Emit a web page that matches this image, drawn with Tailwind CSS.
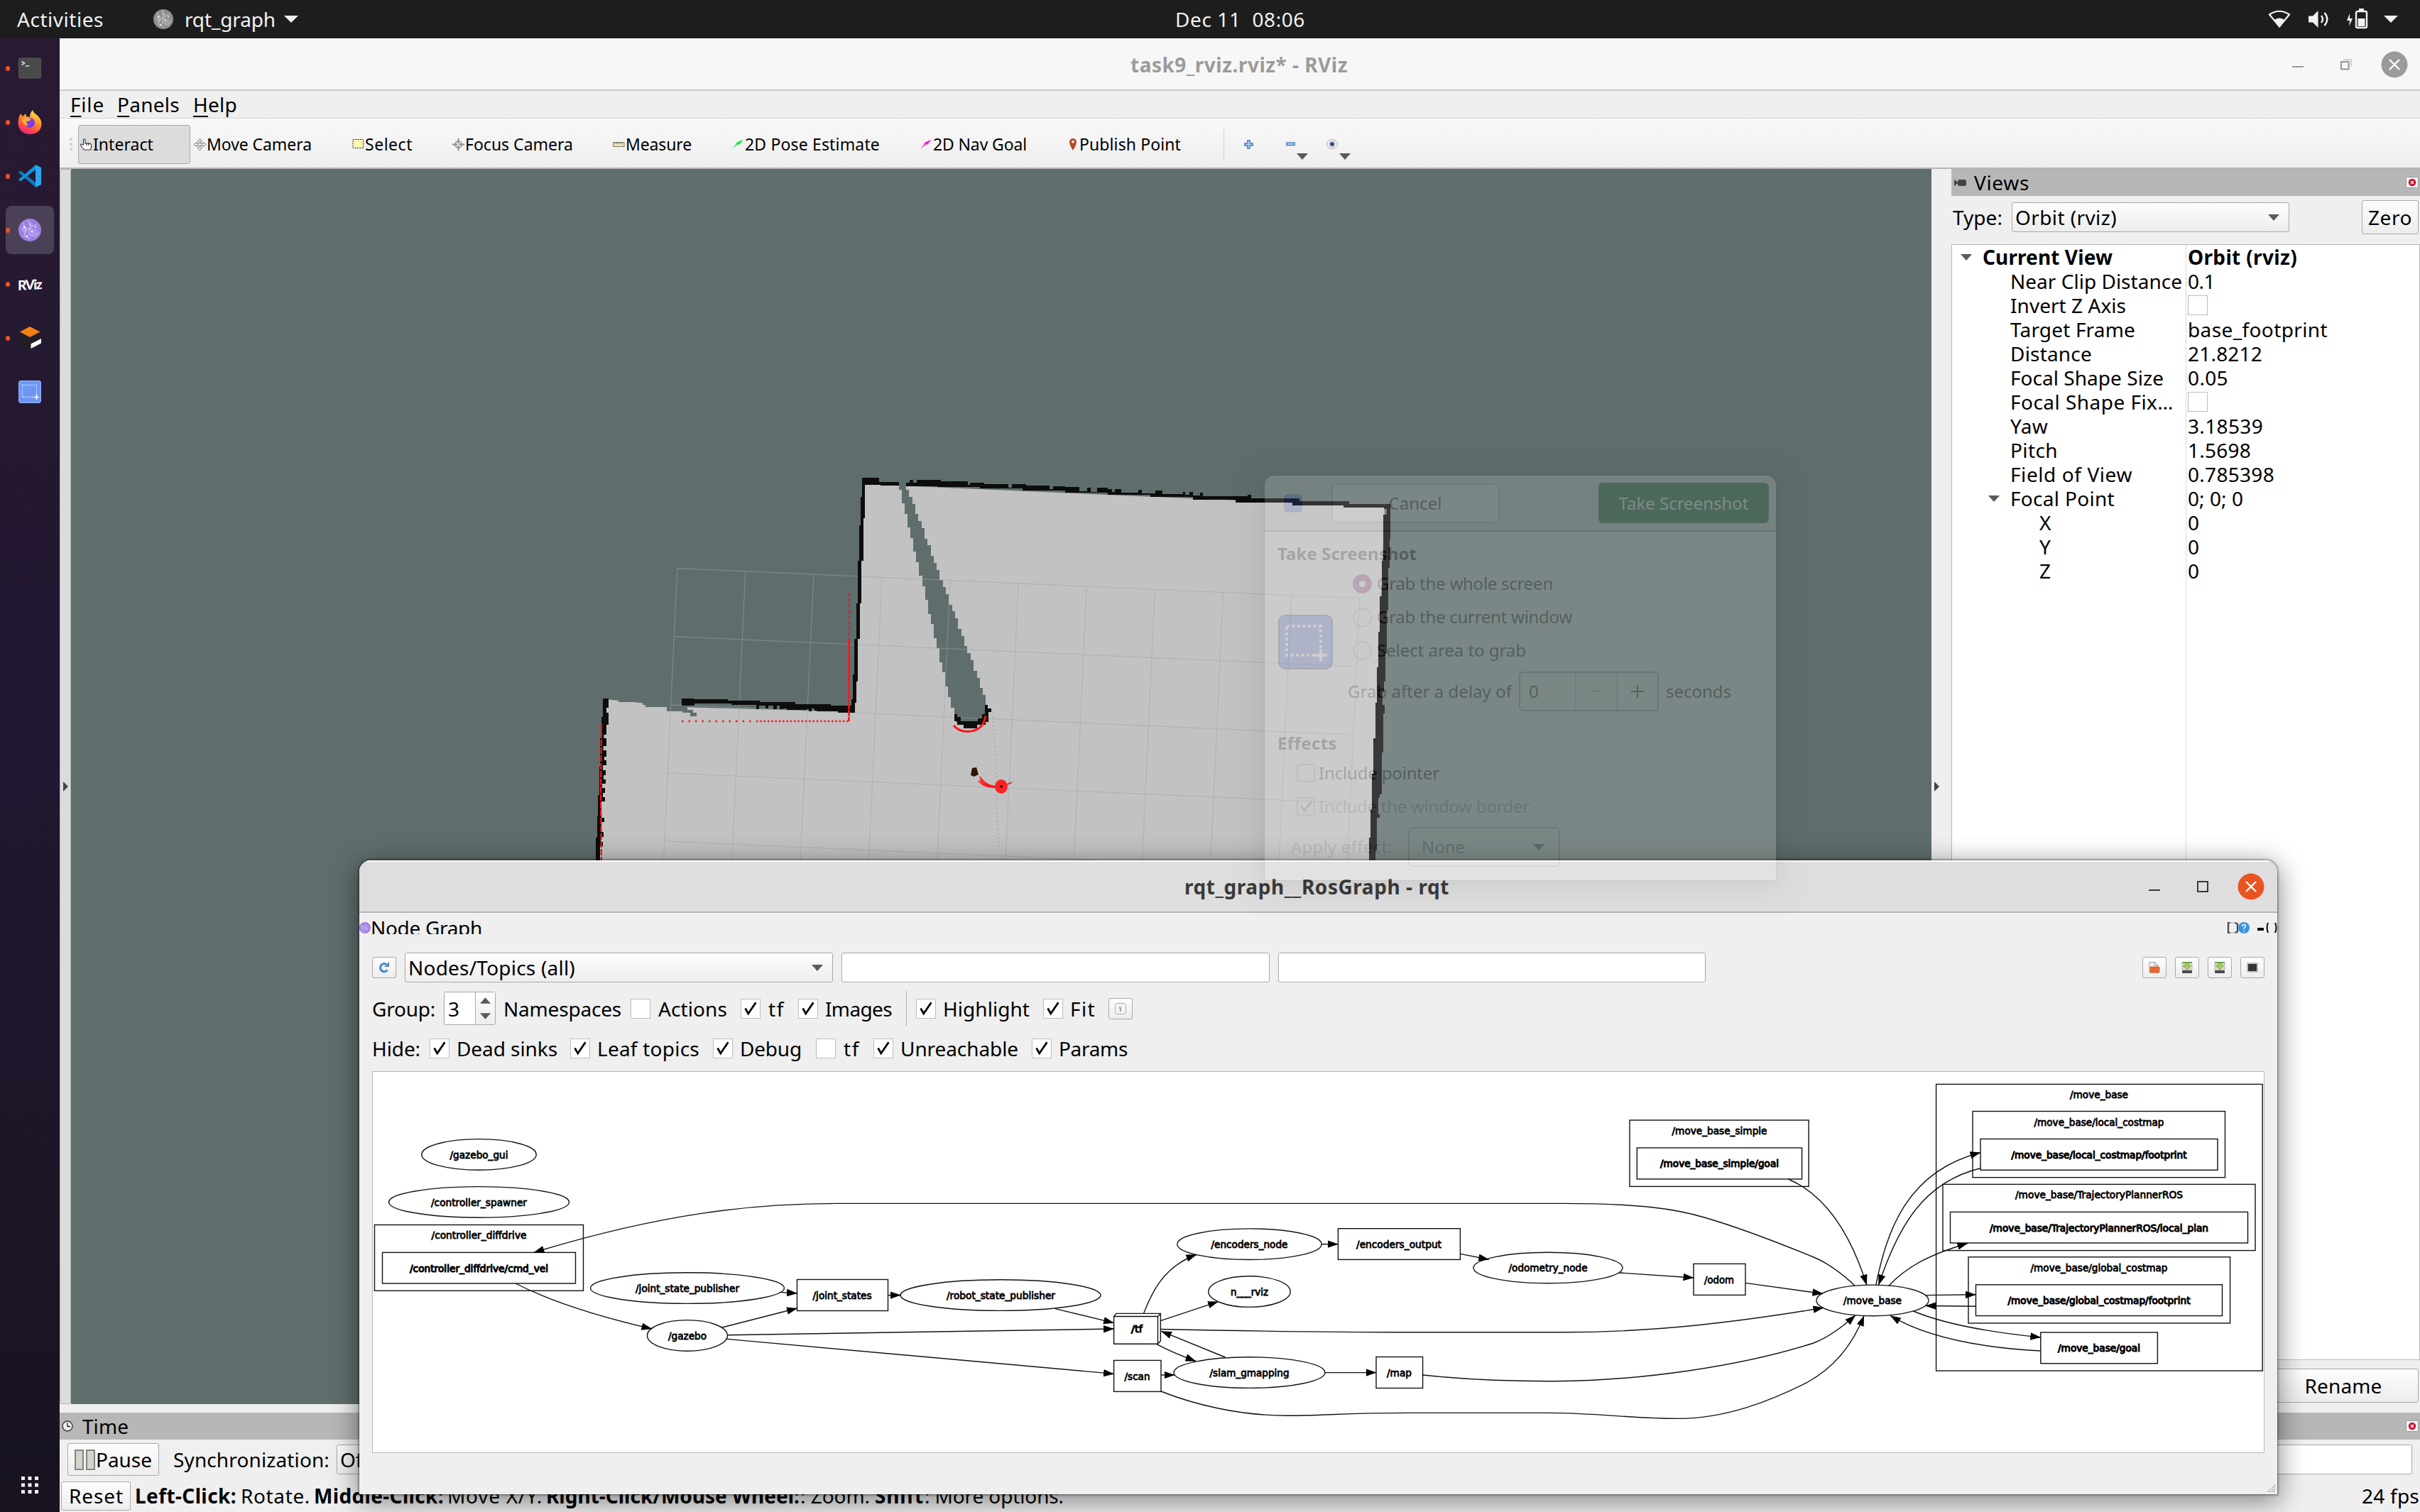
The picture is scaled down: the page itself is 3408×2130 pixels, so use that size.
<!DOCTYPE html>
<html lang="en">
<head>
<meta charset="utf-8">
<title>rqt_graph</title>
<script src="https://cdn.jsdelivr.net/npm/@tailwindcss/browser@4"></script>
</head>
<body class="overflow-hidden">
<svg class="hidden">
  <defs>
    <symbol id="shot" viewBox="0 0 32 32"><rect x="0" y="0" width="32" height="32" rx="4" fill="#6d97f3"/><rect x="0.7" y="0.7" width="30.6" height="30.6" rx="3.5" fill="none" stroke="#8fb0fb" stroke-width="1.2"/><rect x="5.5" y="6.5" width="20" height="17" fill="none" stroke="#e8efff" stroke-width="1.4" stroke-dasharray="1.4 1.8"/><path d="M25.5 20v7M22 23.5h7" stroke="#fff" stroke-width="1.5"/></symbol>
    <symbol id="check" viewBox="0 0 28 28"><path d="M6 13.500L10.500 21.500L22 4.500" fill="none" stroke="#000" stroke-width="3"/></symbol>
    <symbol id="down" viewBox="0 0 16 9"><path d="M0 0h16l-8 9z" fill="#5a5a5a"/></symbol>
    <symbol id="moon" viewBox="0 0 32 32"><circle cx="16" cy="16" r="16" fill="currentColor"/><path d="M6 6l5 9-3 9 8 4M14 2l3 10 9-4M17 12l-3 10 9 3 6-6" fill="none" stroke="#fff" stroke-opacity=".3" stroke-width="2"/><path d="M3 14l7-3 4 5-6 5zM18 14l8 2-2 7-8-2zM15 4l5 4-4 4z" fill="#fff" fill-opacity=".22"/><g fill="#fff" fill-opacity=".9"><circle cx="8" cy="12" r="1.300"/><circle cx="19" cy="18" r="1.200"/><circle cx="12" cy="25" r="1.200"/><circle cx="24" cy="12" r="1.100"/><circle cx="15" cy="14" r="1"/></g></symbol>
    <symbol id="closered" viewBox="0 0 18 16"><rect x=".5" y=".5" width="17" height="15" rx="2" fill="#f6f6f6" stroke="#9c9c9c"/><circle cx="9" cy="8" r="5.200" fill="#c8102e"/><path d="M7 6l4 4M11 6l-4 4" stroke="#fff" stroke-width="1.400"/></symbol>
    <symbol id="save" viewBox="0 0 16 16"><rect x="1" y="1" width="14" height="11" rx="1" fill="#d8d8d4" stroke="#9a9a96" stroke-width=".6"/><rect x="1" y="0" width="14" height="1.500" fill="#5d9a3a"/><path d="M5.500 1.500h5v4h3L8 11 2.500 5.500h3z" fill="#a5d05c" stroke="#6a9b32" stroke-width=".8"/><rect x="1" y="12" width="14" height="4" rx="1" fill="#4a4a4a"/></symbol>
  </defs>
</svg>
<div class="relative flex h-[2130px] w-[3408px] flex-col overflow-hidden bg-[#efefef] font-['Noto_Sans',sans-serif] text-[28px] whitespace-nowrap text-black">

  <!-- system bar -->
  <header class="flex h-[54px] shrink-0 items-center bg-[#1d1d1d] text-[#f2f2f2]">
    <span class="fit ml-[24px] w-[122px]">Activities</span>
    <svg class="ml-[70px] size-[28px] text-[#8f8f8f]"><use href="#moon"/></svg>
    <span class="fit ml-[16px] w-[128px]">rqt_graph</span>
    <svg class="ml-[12px] h-[10px] w-[20px]" viewBox="0 0 20 10"><path d="M0 0h20L10 10z" fill="#f2f2f2"/></svg>
    <span class="fit ml-[1235px] w-[183px] whitespace-pre">Dec 11  08:06</span>
    <svg class="ml-[1356px] h-[26px] w-[32px]" viewBox="0 0 32 26"><path d="M2 6.500Q16-3 30 6.500L16 23.500z" fill="none" stroke="#f2f2f2" stroke-width="2.200"/><path d="M8.500 14Q16 9 23.500 14L16 23.500z" fill="#f2f2f2"/></svg>
    <svg class="ml-[24px] h-[26px] w-[32px]" viewBox="0 0 32 26"><path d="M1 8.500h6L14.500 1v24L7 17.500H1z" fill="#f2f2f2"/><path d="M19 8q4 5 0 10M23.500 4q7.500 9 0 18" fill="none" stroke="#f2f2f2" stroke-width="2.400"/></svg>
    <svg class="ml-[22px] h-[30px] w-[32px]" viewBox="0 0 32 30"><path d="M5 7L1 17h4l-1 8 5-11H5z" fill="#f2f2f2"/><rect x="14" y="4" width="15" height="23" rx="2" fill="none" stroke="#f2f2f2" stroke-width="2.400"/><rect x="18" y="0" width="7" height="3.500" fill="#f2f2f2"/><rect x="16.500" y="14" width="10" height="11" fill="#f2f2f2"/></svg>
    <svg class="ml-[21px] h-[10px] w-[20px]" viewBox="0 0 20 10"><path d="M0 0h20L10 10z" fill="#f2f2f2"/></svg>
  </header>

  <div class="flex h-[2076px] shrink-0">
    <!-- dock -->
    <nav class="flex w-[84px] shrink-0 flex-col bg-linear-to-b from-[#291a33] via-[#211730] to-[#18131f] pt-[4px]">
      <div class="flex h-[76px] items-center pl-[8px]"><i class="h-[7px] w-[6px] rounded-full bg-[#e95420]"></i>
        <svg class="ml-[12px] size-[32px]" viewBox="0 0 32 32"><rect x="0" y="2" width="32" height="28" rx="3" fill="#4a4a4a" stroke="#5c5c5c"/><path d="M4.500 6.500l4 2.500-4 2.500M9.500 13h6" fill="none" stroke="#d6d6d6" stroke-width="1.700"/></svg></div>
      <div class="flex h-[76px] items-center pl-[8px]"><i class="h-[7px] w-[6px] rounded-full bg-[#e95420]"></i>
        <svg class="ml-[11px] size-[34px]" viewBox="0 0 34 34"><defs><linearGradient id="ff" x1=".8" y1="0" x2=".3" y2="1"><stop offset="0" stop-color="#fff04a"/><stop offset=".4" stop-color="#ff9a2a"/><stop offset=".75" stop-color="#ff4b45"/><stop offset="1" stop-color="#e8208a"/></linearGradient></defs><path d="M21 0q1 4 6 7 7 6 6.500 14-2 12.500-16 13Q3 34 .5 20 0 12 4 5l3 4 4-4 1 4 5 1q0-6 4-10z" fill="url(#ff)"/><circle cx="17" cy="18" r="7" fill="#7a3ee0"/><path d="M6 13q6-4 13 0-2 3-7 3 0 3 3 6-8 0-9-9z" fill="#ffb02c"/></svg></div>
      <div class="flex h-[76px] items-center pl-[8px]"><i class="h-[7px] w-[6px] rounded-full bg-[#e95420]"></i>
        <svg class="ml-[12px] size-[32px]" viewBox="0 0 32 32"><path d="M0 11l3-2.500L24 25v6.500z" fill="#0a7cc4"/><path d="M0 21l3 2.500L24 7V.5z" fill="#1292dc"/><path d="M24 0l8 4v24l-8 4V7z" fill="#2aa6ee"/></svg></div>
      <div class="flex h-[76px] items-center pl-[8px]"><div class="flex h-[68px] w-[68px] items-center rounded-lg bg-[#4b4157]"><i class="h-[7px] w-[6px] rounded-full bg-[#e95420]"></i>
        <svg class="ml-[12px] size-[32px] text-[#9c7fe2]"><use href="#moon"/></svg></div></div>
      <div class="flex h-[76px] items-center pl-[8px]"><i class="h-[7px] w-[6px] rounded-full bg-[#e95420]"></i>
        <span class="ml-[11px] w-[34px] -skew-y-3 font-['Lato',sans-serif] text-[19px] leading-none font-black tracking-[-1.5px] text-white">RViz</span></div>
      <div class="flex h-[76px] items-center pl-[8px]"><i class="h-[7px] w-[6px] rounded-full bg-[#e95420]"></i>
        <svg class="ml-[11px] size-[34px]" viewBox="0 0 34 34"><path d="M0 9L17 17v17L0 25z" fill="#221d26"/><path d="M34 9L17 17v17l17-9z" fill="#221d26"/><path d="M17 1l14.500 7.500L17 16 3 8.500z" fill="#f58113"/><path d="M18.500 25.500L33 18v6.500L18.500 32z" fill="#fff"/></svg></div>
      <div class="flex h-[76px] items-center pl-[26px]"><svg class="size-[32px]"><use href="#shot"/></svg></div>
      <svg class="mt-auto mb-[26px] ml-[30px] size-[24px]" viewBox="0 0 24 24" fill="#eee"><path d="M0 0h5v5H0zM9.500 0h5v5h-5zM19 0h5v5h-5zM0 9.500h5v5H0zM9.500 9.500h5v5h-5zM19 9.500h5v5h-5zM0 19h5v5H0zM9.500 19h5v5h-5zM19 19h5v5h-5z"/></svg>
    </nav>

    <!-- RViz main window -->
    <main class="flex w-[3324px] shrink-0 flex-col">
      <div class="flex h-[74px] items-center border-t-2 border-b-2 border-t-[#fdfdfd] border-b-[#cbcbcb] bg-[#f7f7f7]">
        <span class="fit ml-[1508px] w-[306px] font-bold tracking-[0.5px] text-[#9b9b9b]">task9_rviz.rviz* - RViz</span>
        <i class="mt-[6px] ml-[1330px] h-[2px] w-[16px] bg-[#9b9b9b]"></i>
        <svg class="ml-[52px] size-[16px]" viewBox="0 0 16 16"><rect x="1" y="4" width="10.500" height="10.500" fill="none" stroke="#959595" stroke-width="2"/><path d="M4 1h11v10" fill="none" stroke="#c4c4c4" stroke-width="1.500"/></svg>
        <svg class="ml-[41px] size-[38px]" viewBox="0 0 38 38"><circle cx="19" cy="19" r="18.500" fill="#9b9b9b"/><path d="M12 12l14 14M26 12L12 26" stroke="#fff" stroke-width="2.400"/></svg>
      </div>
      <div class="flex h-[39px] items-center border-b border-[#d3d3d3] bg-[#efefef]">
        <span class="fit ml-[15px] w-[48px]"><u class="underline-offset-[5px]">F</u>ile</span>
        <span class="fit ml-[18px] w-[88px]"><u class="underline-offset-[5px]">P</u>anels</span>
        <span class="fit ml-[19px] w-[62px]"><u class="underline-offset-[5px]">H</u>elp</span>
      </div>
      <div class="flex h-[71px] items-center border-b-2 border-[#b5b5b5] bg-linear-to-b from-[#f9f9f9] to-[#eeeeee] pt-[3px] text-[23px]">
        <i class="ml-[14px] h-[18px] w-0 border-l-4 border-dotted border-[#cfcfcf]"></i>
        <div class="ml-[8px] flex h-[55px] w-[158px] items-center rounded-[3px] border border-[#a9a9a9] bg-[#dcdcdc]">
          <svg class="ml-[2px] size-[17px]" viewBox="0 0 17 17"><path d="M4.500 9V1.500q1.500-1 2.500 0V7q1-1 2 0 1-1 2 0 1-1 2 .5 2-.5 2.500 1.500v4l-1 3h-9L2 11.500.5 9q1-2 4 0zM9 7v3M11.500 7.500V10" fill="#fff" stroke="#333" stroke-width="1.100"/></svg>
          <span class="fit ml-[1px] w-[85px]">Interact</span>
        </div>
        <svg class="ml-[5px] size-[17px]" viewBox="0 0 17 17"><path d="M8.500 0l3 4H9.500v3.500H13V5.500l4 3-4 3V9.500H9.500V13h2l-3 4-3-4h2V9.500H4v2l-4-3 4-3v2h3.500V4h-2z" fill="#fff" stroke="#666" stroke-width=".9"/></svg>
        <span class="fit ml-[1px] w-[148px]">Move Camera</span>
        <svg class="ml-[57px] size-[17px]" viewBox="0 0 17 17"><rect x="1" y="1.500" width="14.500" height="12" fill="#fff6b0" stroke="#222" stroke-dasharray="2 1.300"/></svg>
        <span class="fit ml-[1px] w-[67px]">Select</span>
        <svg class="ml-[56px] size-[17px]" viewBox="0 0 17 17"><circle cx="8.500" cy="8.500" r="4.500" fill="none" stroke="#888" stroke-width="1.500"/><path d="M8.500 0v17M0 8.500h17" stroke="#888" stroke-width="1.800"/><circle cx="8.500" cy="8.500" r="1.500" fill="#eee"/></svg>
        <span class="fit ml-[1px] w-[152px]">Focus Camera</span>
        <svg class="ml-[56px] size-[17px]" viewBox="0 0 17 17"><rect x=".5" y="5.500" width="15.500" height="6" fill="#eee5b5" stroke="#7d7a68"/><path d="M3 5v3M5.500 5v3M8 5v3M10.500 5v3M13 5v3" stroke="#666" stroke-width=".9"/></svg>
        <span class="fit ml-[1px] w-[93px]">Measure</span>
        <svg class="ml-[57px] size-[16px]" viewBox="0 0 16 16"><path d="M.5 14.500l6-7.500-1.500-.5L15.500 1.500 10 9 8.500 8z" fill="#12e83c"/></svg>
        <span class="fit ml-[2px] w-[190px]">2D Pose Estimate</span>
        <svg class="ml-[57px] size-[16px]" viewBox="0 0 16 16"><path d="M.5 14.500l6-7.500-1.500-.5L15.500 1.500 10 9 8.500 8z" fill="#e81ad2"/></svg>
        <span class="fit ml-[2px] w-[132px]">2D Nav Goal</span>
        <svg class="ml-[59px] h-[17px] w-[12px]" viewBox="0 0 12 17"><path d="M6 17Q1 9 1 5a5 5 0 0110 0q0 4-5 12z" fill="#b8452c"/><circle cx="6" cy="4.800" r="2" fill="#fbe3da"/></svg>
        <span class="fit ml-[3px] w-[143px]">Publish Point</span>
        <i class="ml-[60px] h-[43px] w-px bg-[#cdcdcd]"></i>
        <svg class="ml-[28px] size-[13px]" viewBox="0 0 13 13"><path d="M4.800.8h3.400v4h4v3.400h-4v4H4.800v-4h-4V4.800h4z" fill="#a9cdf3" stroke="#3a6fb0" stroke-width="1.200"/></svg>
        <svg class="ml-[46px] h-[12px] w-[13px]" viewBox="0 0 13 12"><rect x=".8" y="4" width="11.400" height="3.600" fill="#a9cdf3" stroke="#3a6fb0" stroke-width="1.200"/></svg>
        <svg class="mt-[34px] ml-[2px] h-[9px] w-[16px]"><use href="#down"/></svg>
        <svg class="ml-[26px] size-[16px]" viewBox="0 0 16 16"><ellipse cx="8" cy="8" rx="7.500" ry="6.500" fill="#f2f2f2" stroke="#aaa"/><circle cx="8" cy="8" r="4" fill="#8799cf"/><circle cx="8" cy="8" r="1.800" fill="#111"/></svg>
        <svg class="mt-[34px] ml-[2px] h-[9px] w-[16px]"><use href="#down"/></svg>
      </div>

      <div class="flex h-[1740px] shrink-0">
        <div class="flex w-[16px] items-center justify-center rounded-[3px] border border-[#b0b0b0] bg-[#dcdcdc]"><svg class="h-[14px] w-[7px]" viewBox="0 0 7 14"><path d="M0 0l7 7-7 7z" fill="#444"/></svg></div>
        <svg class="h-[1740px] w-[2620px] shrink-0 bg-[#5f6e6d]" viewBox="100 238 2620 1740">
          <!-- free space of the occupancy map -->
          <path d="M1216 682L1950 714 1930 1230H843L853 985 960 996 1202 1003z" fill="#c2c2c2"/>
          <path d="M871 982V989H905V993H909V996H939V1002H961V1004H972V1009H981V1004H976V1000H968V996H964V982z" fill="#5f6e6d" shape-rendering="crispEdges"/>
          <path d="M1266 678H1276V690H1280V700H1285V710H1289V724H1293V734H1298V744H1302V759H1306V768H1311V783H1315V793H1319V803H1323V817H1328V827H1332V837H1336V852H1341V861H1345V871H1349V886H1354V896H1358V910H1362V920H1367V930H1371V945H1376V955H1380V969H1384V979H1388V1014H1384V1018H1347V1011H1344V997H1339V982H1335V967H1331V947H1327V933H1323V913H1319V899H1315V879H1311V865H1307V845H1303V826H1299V811H1294V792H1290V777H1286V758H1282V743H1278V724H1274V709H1270V690H1266z" fill="#5f6e6d" shape-rendering="crispEdges"/>
          <g transform="matrix(.961 .0424 -.0446 .961 953.700 800.600)"><path d="M0 0H1000M0 100H1000M0 200H1000M0 300H1000M0 400H1000M0 0V450M100 0V450M200 0V450M300 0V450M400 0V450M500 0V450M600 0V450M700 0V450M800 0V450M900 0V450M1000 0V450" fill="none" stroke="#a0a4a4" stroke-opacity=".5" stroke-width="1.200"/></g>
          <g fill="#0d0d0d" shape-rendering="crispEdges">
            <path d="M1214 673H1238V679H1266V684H1240V683H1218V730H1216V790H1213V850H1211V900H1208V960H1206V990H1204V1004H1199V985H1201V950H1203V900H1206V850H1208V790H1210V740H1212V700H1214z"/>
            <path d="M1276 680H1281V676H1286V680H1291V676H1325V678H1363V683H1366V680H1386V682H1420V687H1425V682H1445V684H1478V689H1483V685H1500V686H1520V692H1531V687H1536V693H1545V687H1560V689H1566V693H1570V689H1579V694H1603V690H1608V695H1627V691H1637V696H1666V693H1669V697H1675V693H1680V698H1690V694H1694V699H1757V697H1762V702H1830V706H1900V710H1958V715H1892V712H1820V708H1740V704H1680V700H1620V697H1560V694H1500V691H1440V688H1380V686H1320V685H1276z"/>
            <path d="M960 984H977V985H1025V987H1070V989H1120V992H1170V994H1204V1004H1180V1002H1150V1001H1147V998H1143V1002H1139V999H1136V1000H1108V998H1103V999H1098V994H1094V999H1089V994H1082V998H1078V994H1069V999H1065V993H1030V991H978V994H960z"/>
            <path d="M849 984H857V997H854V1004H857V1021H854V1035H850V1040H854V1051H849V1057H854V1066H851V1071H854V1078H849V1085H853V1092H850V1098H853V1104H848V1110H852V1117H849V1123H852V1129H847V1152H851V1158H847V1172H850V1179H846V1186H849V1192H845V1213H839V1180H841V1150H842V1120H844V1080H845V1040H847V1010H849z"/>
            <path d="M1949 713H1958V760H1957V800H1955V860H1953V920H1951V960H1949V975H1947V993H1950V1005H1948V1060H1946V1119H1943V1124H1941V1147H1943V1152H1939V1198H1937V1213H1928V1180H1930V1140H1932V1090H1934V1040H1937V990H1939V940H1941V890H1943V840H1946V790H1948V725H1953V717H1949z"/>
            <path d="M1344 1006H1348V1010H1353V1016H1377V1012H1383V1006H1387V993H1391V998H1396V1003H1392V1017H1388V1021H1376V1026H1357V1021H1348V1016H1344z"/>
          </g>
          <path d="M1369 1082l6-1 3 10-6 3-5-2z" fill="#2c1604"/>
          <g fill="none" stroke="#ff1414">
            <path d="M1196 835V900" stroke-width="2" stroke-dasharray="5 3"/><path d="M1195.500 900V1016" stroke-width="2.600" stroke-dasharray="9 1"/>
            <path d="M960 1016h100" stroke-width="2.500" stroke-dasharray="2.500 7"/><path d="M1065 1016h132" stroke-width="2.500" stroke-dasharray="2.500 2.800"/>
            <path d="M847 1020l-1 100 1 100" stroke-width="2.200" stroke-dasharray="9 2"/>
            <path d="M1343 1022q8 9 20 8.500 22-1 25-22" stroke-width="3"/>
            <path d="M1380 1094q8 14 26 14M1378 1100q9 11 28 9M1380 1098q8 12 26 9M1412 1108l13-6" stroke-width="1.700"/>
          </g>
          <ellipse cx="1410" cy="1108" rx="9" ry="10" fill="#fb2222"/><circle cx="1410" cy="1108" r="2" fill="#222"/>
          <path d="M1398 1010l6 90M1403 1120l4 81" stroke="#777" stroke-width="1" stroke-dasharray="1 5" fill="none"/>
        </svg>
        <div class="flex w-[28px] items-center pl-[4px]"><svg class="h-[14px] w-[7px]" viewBox="0 0 7 14"><path d="M0 0l7 7-7 7z" fill="#444"/></svg></div>
        <section class="flex w-[660px] flex-col">
          <div class="flex h-[38px] items-center bg-[#b7b7b7]">
            <svg class="ml-[4px] h-[9px] w-[17px]" viewBox="0 0 17 9"><rect x="5" y="0" width="12" height="9" rx="2.500" fill="#444"/><path d="M0 0l6 4.500L0 9z" fill="#444"/></svg>
            <span class="fit ml-[11px] w-[78px]">Views</span>
            <svg class="mr-[2px] ml-auto h-[16px] w-[18px]"><use href="#closered"/></svg>
          </div>
          <div class="flex h-[60px] items-center">
            <span class="fit ml-[2px] w-[70px]">Type:</span>
            <div class="ml-[13px] flex h-[42px] w-[391px] items-center rounded-[3px] border border-[#a9a9a9] bg-linear-to-b from-[#fdfdfd] to-[#ededed]"><span class="fit ml-[4px] w-[143px]">Orbit (rviz)</span><svg class="mr-[13px] ml-auto h-[9px] w-[16px]"><use href="#down"/></svg></div>
            <div class="mr-[2px] ml-auto flex h-[48px] w-[80px] items-center rounded-[3px] border border-[#a9a9a9] bg-linear-to-b from-[#fdfdfd] to-[#ededed] pl-[8px]"><span class="fit w-[62px]">Zero</span></div>
          </div>
          <div class="mt-[8px] flex h-[1572px] border border-[#b7b7b7] bg-white leading-[34px]">
            <div class="flex w-[330px] shrink-0 flex-col border-r border-[#dadada] pl-[82px]">
              <div class="-ml-[70px] flex h-[34px] items-center"><svg class="h-[9px] w-[16px]"><use href="#down"/></svg><span class="fit ml-[15px] w-[183px] font-bold">Current View</span></div>
              <div class="h-[34px]"><span class="fit inline-block w-[242px]">Near Clip Distance</span></div>
              <div class="h-[34px]"><span class="fit inline-block w-[163px]">Invert Z Axis</span></div>
              <div class="h-[34px]"><span class="fit inline-block w-[176px]">Target Frame</span></div>
              <div class="h-[34px]"><span class="fit inline-block w-[115px]">Distance</span></div>
              <div class="h-[34px]"><span class="fit inline-block w-[216px]">Focal Shape Size</span></div>
              <div class="h-[34px]"><span class="fit inline-block w-[230px]">Focal Shape Fix…</span></div>
              <div class="h-[34px]"><span class="fit inline-block w-[53px]">Yaw</span></div>
              <div class="h-[34px]"><span class="fit inline-block w-[67px]">Pitch</span></div>
              <div class="h-[34px]"><span class="fit inline-block w-[172px]">Field of View</span></div>
              <div class="-ml-[31px] flex h-[34px] items-center"><svg class="h-[9px] w-[16px]"><use href="#down"/></svg><span class="fit ml-[15px] w-[147px]">Focal Point</span></div>
              <div class="h-[34px] pl-[41px]">X</div>
              <div class="h-[34px] pl-[41px]">Y</div>
              <div class="h-[34px] pl-[41px]">Z</div>
            </div>
            <div class="flex flex-col pl-[2px]">
              <div class="h-[34px]"><span class="fit inline-block w-[154px] font-bold">Orbit (rviz)</span></div>
              <div class="h-[34px]"><span class="fit inline-block w-[38px]">0.1</span></div>
              <div class="flex h-[34px] items-center"><i class="size-[28px] border border-[#bdbdbd] bg-white"></i></div>
              <div class="h-[34px]"><span class="fit inline-block w-[197px]">base_footprint</span></div>
              <div class="h-[34px]"><span class="fit inline-block w-[105px]">21.8212</span></div>
              <div class="h-[34px]"><span class="fit inline-block w-[57px]">0.05</span></div>
              <div class="flex h-[34px] items-center"><i class="size-[28px] border border-[#bdbdbd] bg-white"></i></div>
              <div class="h-[34px]"><span class="fit inline-block w-[106px]">3.18539</span></div>
              <div class="h-[34px]"><span class="fit inline-block w-[89px]">1.5698</span></div>
              <div class="h-[34px]"><span class="fit inline-block w-[122px]">0.785398</span></div>
              <div class="h-[34px]"><span class="fit inline-block w-[78px]">0; 0; 0</span></div>
              <div class="h-[34px]">0</div>
              <div class="h-[34px]">0</div>
              <div class="h-[34px]">0</div>
            </div>
          </div>
          <div class="mt-[12px] mr-[2px] ml-auto flex h-[48px] w-[212px] items-center justify-center rounded-[3px] border border-[#a9a9a9] bg-linear-to-b from-[#fdfdfd] to-[#ededed]"><span class="fit w-[109px]">Rename</span></div>
        </section>
      </div>

      <div class="mt-[12px] flex h-[38px] shrink-0 items-center bg-[#b7b7b7]">
        <svg class="ml-[3px] size-[16px]" viewBox="0 0 16 16"><circle cx="8" cy="8" r="7" fill="#f2f2f2" stroke="#555" stroke-width="1.800"/><path d="M8 3.500V8.500h4" fill="none" stroke="#222" stroke-width="1.400"/></svg>
        <span class="fit ml-[13px] w-[65px]">Time</span>
        <svg class="mr-[2px] ml-auto h-[16px] w-[18px]"><use href="#closered"/></svg>
      </div>
      <div class="flex h-[56px] shrink-0 items-center">
        <div class="ml-[11px] flex h-[46px] w-[129px] items-center rounded-[3px] border border-[#a9a9a9] bg-linear-to-b from-[#fdfdfd] to-[#ededed]">
          <svg class="ml-[9px] size-[29px]" viewBox="0 0 29 29"><rect x="1" y="1" width="11" height="27" fill="#d4d4cc" stroke="#85857c" stroke-width="2"/><rect x="17" y="1" width="11" height="27" fill="#d4d4cc" stroke="#85857c" stroke-width="2"/></svg>
          <span class="fit ml-[1px] w-[79px]">Pause</span></div>
        <span class="fit ml-[20px] w-[220px]">Synchronization:</span>
        <div class="ml-[10px] flex h-[42px] w-[120px] items-center rounded-[3px] border border-[#a9a9a9] bg-linear-to-b from-[#fdfdfd] to-[#ededed] pl-[4px]">Off</div>
        <div class="mr-[11px] ml-auto h-[42px] w-[300px] rounded-[3px] border border-[#a9a9a9] bg-white"></div>
      </div>
      <div class="flex h-[46px] shrink-0 items-center">
        <div class="ml-[2px] flex h-[41px] w-[98px] items-center rounded-[3px] border border-[#a9a9a9] bg-linear-to-b from-[#fdfdfd] to-[#ededed] pl-[10px]"><span class="fit w-[77px]">Reset</span></div>
        <span class="fit ml-[6px] w-[143px] font-bold">Left-Click:</span>
        <span class="fit ml-[6px] w-[98px]">Rotate.</span>
        <span class="fit ml-[5px] w-[183px] font-bold">Middle-Click:</span>
        <span class="fit ml-[5px] w-[134px]">Move X/Y.</span>
        <span class="fit ml-[5px] w-[357px] font-bold">Right-Click/Mouse Wheel:</span>
        <span class="fit ml-[1px] w-[98px]">: Zoom.</span>
        <span class="fit ml-[7px] w-[69px] font-bold">Shift</span>
        <span class="fit ml-[1px] w-[196px]">: More options.</span>
        <span class="fit mr-px ml-auto w-[81px]">24 fps</span>
      </div>
    </main>
  </div>

  <!-- rqt window -->
  <section class="absolute top-[1212px] left-[506px] flex h-[893px] w-[2701px] flex-col overflow-hidden rounded-t-[16px] bg-[#efefef] shadow-[0_8px_36px_4px_rgba(0,0,0,0.42),0_0_3px_1px_rgba(0,0,0,0.5)]">
    <div class="flex h-[74px] shrink-0 items-center border-t-2 border-b-2 border-t-white border-b-[#b7b7b7] bg-[#dedede]">
      <span class="fit ml-[1162px] w-[373px] font-bold tracking-[0.5px] text-[#3a3a3a]">rqt_graph__RosGraph - rqt</span>
      <i class="mt-[9px] ml-[985px] h-[2px] w-[16px] bg-[#3a3a3a]"></i>
      <i class="ml-[52px] size-[16px] border-2 border-[#3a3a3a]"></i>
      <svg class="ml-[41px] size-[38px]" viewBox="0 0 38 38"><circle cx="19" cy="19" r="18.500" fill="#e95420"/><path d="M12 12l14 14M26 12L12 26" stroke="#fff" stroke-width="2.400"/></svg>
    </div>
    <div class="mt-[10px] flex h-[20px] shrink-0 items-start overflow-hidden">
      <svg class="mt-[3px] size-[16px] text-[#9c7fe2]"><use href="#moon"/></svg>
      <span class="fit w-[157px] leading-[22px]">Node Graph</span>
      <svg class="mt-[3px] ml-auto h-[16px] w-[70px]" viewBox="0 0 70 16"><path d="M4 1H1v14h3M10 1q3 0 4 3v8q-1 3-4 3" fill="none" stroke="#222" stroke-width="2"/><rect x="2" y="1" width="13" height="14" fill="none" stroke="#aaa"/><circle cx="23" cy="8" r="8" fill="#3795e0"/><path d="M20.500 6q0-2.500 2.500-2.500t2.500 2q0 1.500-2.500 3v1.500M23 12v1.500" fill="none" stroke="#fff" stroke-width="1.500"/><rect x="42" y="8" width="9" height="4"/><path d="M57 1q-3 7 0 14M67 1q3 7 0 14" fill="none" stroke="#111" stroke-width="2"/></svg>
    </div>
    <div class="mt-[26px] flex h-[42px] shrink-0 items-center pl-[18px]">
      <div class="flex h-[30px] w-[34px] items-center justify-center rounded-[3px] border border-[#a9a9a9] bg-linear-to-b from-[#fdfdfd] to-[#ededed]"><svg class="size-[16px]" viewBox="0 0 16 16"><path d="M12.500 11.500A5.500 5.500 0 1 1 11 3.500" fill="none" stroke="#4b8ac9" stroke-width="3.200"/><path d="M15 0v7H8z" fill="#4b8ac9"/></svg></div>
      <div class="ml-[12px] flex h-[42px] w-[603px] items-center rounded-[3px] border border-[#a9a9a9] bg-linear-to-b from-[#fdfdfd] to-[#ededed]"><span class="fit ml-[4px] w-[235px]">Nodes/Topics (all)</span><svg class="mr-[13px] ml-auto h-[9px] w-[16px]"><use href="#down"/></svg></div>
      <div class="ml-[12px] h-[42px] w-[603px] rounded-[3px] border border-[#a9a9a9] bg-white"></div>
      <div class="ml-[12px] h-[42px] w-[602px] rounded-[3px] border border-[#a9a9a9] bg-white"></div>
      <div class="mr-[18px] ml-auto flex gap-[12px]">
        <div class="flex h-[30px] w-[34px] items-center justify-center rounded-[3px] border border-[#a9a9a9] bg-linear-to-b from-[#fdfdfd] to-[#ededed]"><svg class="size-[16px]" viewBox="0 0 16 16"><path d="M1 .5h8l4 4V15H1z" fill="#f4f4f4" stroke="#999"/><path d="M8 1v4h4" fill="none" stroke="#888"/><rect x="2" y="7" width="13" height="8" rx="1" fill="#ea6a2c" stroke="#c9501a" stroke-width=".8"/></svg></div>
        <div class="flex h-[30px] w-[34px] items-center justify-center rounded-[3px] border border-[#a9a9a9] bg-linear-to-b from-[#fdfdfd] to-[#ededed]"><svg class="size-[16px]"><use href="#save"/></svg></div>
        <div class="flex h-[30px] w-[34px] items-center justify-center rounded-[3px] border border-[#a9a9a9] bg-linear-to-b from-[#fdfdfd] to-[#ededed]"><svg class="size-[16px]"><use href="#save"/></svg></div>
        <div class="flex h-[30px] w-[34px] items-center justify-center rounded-[3px] border border-[#a9a9a9] bg-linear-to-b from-[#fdfdfd] to-[#ededed]"><i class="h-[14px] w-[16px] border-2 border-[#c2c2c2] bg-[#333]"></i></div>
      </div>
    </div>
    <div class="mt-[12px] flex h-[49px] shrink-0 items-center pl-[18px]">
      <span class="fit w-[89px]">Group:</span>
      <div class="ml-[12px] flex h-[47px] w-[73px] rounded-[3px] border border-[#a9a9a9] bg-white">
        <span class="w-[44px] border-r border-[#a9a9a9] pl-[5px] leading-[46px]">3</span>
        <span class="flex flex-1 flex-col items-center justify-center gap-[13px] bg-linear-to-b from-[#fdfdfd] to-[#ededed]"><svg class="h-[9px] w-[15px] rotate-180"><use href="#down"/></svg><svg class="h-[9px] w-[15px]"><use href="#down"/></svg></span>
      </div>
      <span class="fit ml-[11px] w-[166px]">Namespaces</span>
      <i class="ml-[13px] size-[28px] border border-[#bdbdbd] bg-white"></i><span class="fit ml-[11px] w-[97px]">Actions</span>
      <i class="ml-[19px] size-[28px] border border-[#bdbdbd] bg-white"><svg class="size-[26px]"><use href="#check"/></svg></i><span class="fit ml-[11px] w-[23px]">tf</span>
      <i class="ml-[19px] size-[28px] border border-[#bdbdbd] bg-white"><svg class="size-[26px]"><use href="#check"/></svg></i><span class="fit ml-[10px] w-[94px]">Images</span>
      <i class="ml-[20px] h-[49px] w-px bg-[#b0b0b0]"></i>
      <i class="ml-[13px] size-[28px] border border-[#bdbdbd] bg-white"><svg class="size-[26px]"><use href="#check"/></svg></i><span class="fit ml-[10px] w-[122px]">Highlight</span>
      <i class="ml-[19px] size-[28px] border border-[#bdbdbd] bg-white"><svg class="size-[26px]"><use href="#check"/></svg></i><span class="fit ml-[10px] w-[36px]">Fit</span>
      <div class="ml-[18px] flex h-[30px] w-[34px] items-center justify-center rounded-[3px] border border-[#a9a9a9] bg-linear-to-b from-[#fdfdfd] to-[#ededed]"><svg class="size-[16px]" viewBox="0 0 16 16"><rect x=".5" y=".5" width="15" height="15" rx="3" fill="#f4f4f4" stroke="#aaa"/><path d="M6 5.500h2.500v6H7.500V7.500H6z" fill="#fff" stroke="#888" stroke-width=".8"/></svg></div>
    </div>
    <div class="mt-[17px] flex h-[30px] shrink-0 items-center pl-[18px]">
      <span class="fit w-[68px]">Hide:</span>
      <i class="ml-[13px] size-[28px] border border-[#bdbdbd] bg-white"><svg class="size-[26px]"><use href="#check"/></svg></i><span class="fit ml-[10px] w-[142px]">Dead sinks</span>
      <i class="ml-[18px] size-[28px] border border-[#bdbdbd] bg-white"><svg class="size-[26px]"><use href="#check"/></svg></i><span class="fit ml-[10px] w-[144px]">Leaf topics</span>
      <i class="ml-[19px] size-[28px] border border-[#bdbdbd] bg-white"><svg class="size-[26px]"><use href="#check"/></svg></i><span class="fit ml-[10px] w-[87px]">Debug</span>
      <i class="ml-[20px] size-[28px] border border-[#bdbdbd] bg-white"></i><span class="fit ml-[11px] w-[23px]">tf</span>
      <i class="ml-[19px] size-[28px] border border-[#bdbdbd] bg-white"><svg class="size-[26px]"><use href="#check"/></svg></i><span class="fit ml-[10px] w-[166px]">Unreachable</span>
      <i class="ml-[19px] size-[28px] border border-[#bdbdbd] bg-white"><svg class="size-[26px]"><use href="#check"/></svg></i><span class="fit ml-[10px] w-[97px]">Params</span>
    </div>
    <!-- node graph canvas -->
    <div class="mt-[17px] ml-[18px] h-[538px] w-[2665px] shrink-0 border border-[#b7b7b7] bg-white">
      <svg class="block h-[536px] w-[2663px]" viewBox="525 1510 2663 536">
        <defs><marker id="arr" markerUnits="userSpaceOnUse" markerWidth="16" markerHeight="12" refX="14.500" refY="6" orient="auto"><path d="M0 .8L15 6 0 11.200z" fill="#000"/></marker></defs>
        <g fill="none" stroke="#111" stroke-width="1.400">
          <ellipse cx="674.500" cy="1626.400" rx="80.700" ry="21.800"/><ellipse cx="674.500" cy="1693.400" rx="127" ry="21.800"/>
          <rect x="527.500" y="1725.500" width="294" height="92.800"/><rect x="538.500" y="1764.400" width="272" height="43.600"/>
          <ellipse cx="968" cy="1814.600" rx="136.500" ry="21.800"/><ellipse cx="968" cy="1881.400" rx="56.500" ry="21.800"/>
          <rect x="1122.500" y="1802.500" width="128" height="44"/><ellipse cx="1409" cy="1824.600" rx="141" ry="21.800"/>
          <ellipse cx="1759.500" cy="1752.700" rx="101.700" ry="21.800"/><rect x="1884.400" y="1730.700" width="172" height="43.700"/>
          <ellipse cx="2180" cy="1786" rx="105" ry="21.800"/><rect x="2385" y="1780.400" width="73" height="44"/>
          <ellipse cx="1759.500" cy="1819.600" rx="57.700" ry="21.800"/><path d="M1568.600 1893.200V1854.500L1572 1850.400H1634.400V1889L1630.500 1893.200zM1568.600 1854.500H1630.500V1893.200M1630.500 1854.500L1634.400 1850.400"/>
          <rect x="1568.600" y="1916.400" width="66.400" height="44"/><ellipse cx="1759.500" cy="1933.600" rx="106.500" ry="21.800"/><rect x="1938" y="1911.500" width="65.600" height="44"/>
          <rect x="2295" y="1578" width="252.200" height="93.400"/><rect x="2305.300" y="1617" width="232.300" height="44"/>
          <ellipse cx="2637" cy="1831.900" rx="79" ry="21.800"/>
          <rect x="2726.600" y="1527.400" width="459.600" height="403.700"/>
          <rect x="2778" y="1565.500" width="355.500" height="93.200"/><rect x="2789" y="1604.500" width="334" height="43.800"/>
          <rect x="2736" y="1668.400" width="440" height="93.200"/><rect x="2746.500" y="1707.400" width="419" height="43.600"/>
          <rect x="2772" y="1770.800" width="368.600" height="93.200"/><rect x="2782.500" y="1809.800" width="347" height="43.800"/>
          <rect x="2873.800" y="1877" width="164.600" height="43.700"/>
        </g>
        <g fill="none" stroke="#111" stroke-width="1.400">
          <path marker-end="url(#arr)" d="M2612 1811C2596 1796 2576 1780 2554 1771 2520 1757 2455 1731 2400 1715 2360 1703 2310 1695.400 2202 1695.400H1182C1060 1695 930 1710 752 1764.300"/>
          <path marker-end="url(#arr)" d="M726 1808C775 1833 840 1854 918 1872"/>
          <path marker-end="url(#arr)" d="M1098 1820.400L1122.500 1822"/><path marker-end="url(#arr)" d="M1017 1870L1122.500 1843"/>
          <path marker-end="url(#arr)" d="M1025 1880.700L1568.600 1872"/><path marker-end="url(#arr)" d="M1023.600 1886.400L1568.600 1935.400"/>
          <path marker-end="url(#arr)" d="M1250.600 1824.600H1268.500"/><path marker-end="url(#arr)" d="M1486 1843.600L1568.600 1863.600"/>
          <path marker-end="url(#arr)" d="M1610.700 1850C1620 1826 1636 1785 1685 1767.500"/><path marker-end="url(#arr)" d="M1634.300 1860.700L1715.500 1833.600"/>
          <path marker-end="url(#arr)" d="M1634 1872.500C1750 1875 1880 1876.800 1992 1876.800H2202C2330 1876.800 2450 1862 2568 1842.300"/>
          <path marker-end="url(#arr)" d="M1725.500 1912L1635.500 1875.400"/><path marker-end="url(#arr)" d="M1629 1893.600Q1650 1905 1684 1917.500"/>
          <path marker-end="url(#arr)" d="M1635 1937H1654"/><path marker-end="url(#arr)" d="M1866 1933.600H1938"/>
          <path marker-end="url(#arr)" d="M2003.600 1937C2060 1943 2125 1946 2190 1945.700 2310 1945 2450 1925 2554 1892 2577 1883 2595 1869 2612.800 1853"/>
          <path marker-end="url(#arr)" d="M1635 1960C1680 1978 1745 1994.500 1815 1994.300 1865 1994 1900 1990.400 1985 1990.400H2177C2250 1990.400 2300 1998.500 2365 1998.400 2430 1998 2490 1975 2544 1948 2585 1926 2610 1892 2625 1853.600"/>
          <path marker-end="url(#arr)" d="M1861 1752.700H1884.300"/><path marker-end="url(#arr)" d="M2056.500 1766.400L2096.700 1774.300"/><path marker-end="url(#arr)" d="M2280 1793L2385 1800"/><path marker-end="url(#arr)" d="M2458 1807.400L2567 1822.500"/>
          <path marker-end="url(#arr)" d="M2518.300 1661C2570 1683 2605 1735 2628.800 1810"/>
          <path marker-end="url(#arr)" d="M2641.700 1810.600C2657 1735 2685 1650 2789 1623.700"/><path marker-end="url(#arr)" d="M2789 1645.800C2710 1665 2674 1725 2645.600 1810"/>
          <path marker-end="url(#arr)" d="M2659.700 1811.400C2685 1785 2715 1768 2771 1751.500"/>
          <path marker-end="url(#arr)" d="M2711.800 1824.600L2782.500 1823.800"/><path marker-end="url(#arr)" d="M2782.500 1840.300L2711.800 1839.500"/>
          <path marker-end="url(#arr)" d="M2694.400 1847C2735 1864 2795 1876 2873.800 1884"/><path marker-end="url(#arr)" d="M2873.800 1903C2780 1898 2710 1882 2662.300 1853.600"/>
        </g>
        <g class="font-['DejaVu_Sans',sans-serif] text-[14px]" text-anchor="middle" fill="#000" stroke="#000" stroke-width=".8" id="labels">
          <text x="674.500" y="1631.500" textLength="82" lengthAdjust="spacingAndGlyphs">/gazebo_gui</text><text x="674.500" y="1698.500" textLength="135" lengthAdjust="spacingAndGlyphs">/controller_spawner</text>
          <text x="674.500" y="1745" textLength="134" lengthAdjust="spacingAndGlyphs">/controller_diffdrive</text><text x="674.500" y="1791.500" textLength="195" stroke-width="1.100" lengthAdjust="spacingAndGlyphs">/controller_diffdrive/cmd_vel</text>
          <text x="968" y="1819.500" textLength="146" lengthAdjust="spacingAndGlyphs">/joint_state_publisher</text><text x="968" y="1886.500" textLength="54" lengthAdjust="spacingAndGlyphs">/gazebo</text>
          <text x="1186" y="1829.500" textLength="83" lengthAdjust="spacingAndGlyphs">/joint_states</text><text x="1409.500" y="1829.500" textLength="153" lengthAdjust="spacingAndGlyphs">/robot_state_publisher</text>
          <text x="1759.500" y="1757.500" textLength="108" lengthAdjust="spacingAndGlyphs">/encoders_node</text><text x="1970" y="1757.500" textLength="120" lengthAdjust="spacingAndGlyphs">/encoders_output</text>
          <text x="2180" y="1791" textLength="111" lengthAdjust="spacingAndGlyphs">/odometry_node</text><text x="2421" y="1807.500" textLength="42" lengthAdjust="spacingAndGlyphs">/odom</text>
          <text x="1759.500" y="1824.500" textLength="53" lengthAdjust="spacingAndGlyphs">n___rviz</text><text x="1601" y="1876.500" textLength="16" stroke-width="1.100" lengthAdjust="spacingAndGlyphs">/tf</text>
          <text x="1601.500" y="1943.500" textLength="36" lengthAdjust="spacingAndGlyphs">/scan</text><text x="1759.500" y="1938.500" textLength="112" lengthAdjust="spacingAndGlyphs">/slam_gmapping</text><text x="1970.500" y="1938.500" textLength="35" lengthAdjust="spacingAndGlyphs">/map</text>
          <text x="2421.500" y="1597.500" textLength="134" lengthAdjust="spacingAndGlyphs">/move_base_simple</text><text x="2421.500" y="1644" textLength="167" stroke-width="1.100" lengthAdjust="spacingAndGlyphs">/move_base_simple/goal</text>
          <text x="2637" y="1837" textLength="82" lengthAdjust="spacingAndGlyphs">/move_base</text><text x="2956" y="1547" textLength="82" lengthAdjust="spacingAndGlyphs">/move_base</text>
          <text x="2956" y="1585.500" textLength="183" lengthAdjust="spacingAndGlyphs">/move_base/local_costmap</text><text x="2956" y="1631.500" textLength="247" stroke-width="1.100" lengthAdjust="spacingAndGlyphs">/move_base/local_costmap/footprint</text>
          <text x="2956" y="1688" textLength="236" lengthAdjust="spacingAndGlyphs">/move_base/TrajectoryPlannerROS</text><text x="2956" y="1734.500" textLength="308" stroke-width="1.100" lengthAdjust="spacingAndGlyphs">/move_base/TrajectoryPlannerROS/local_plan</text>
          <text x="2956" y="1790.500" textLength="193" lengthAdjust="spacingAndGlyphs">/move_base/global_costmap</text><text x="2956" y="1837" textLength="257" stroke-width="1.100" lengthAdjust="spacingAndGlyphs">/move_base/global_costmap/footprint</text>
          <text x="2956" y="1904" textLength="116" stroke-width="1.100" lengthAdjust="spacingAndGlyphs">/move_base/goal</text>
        </g>
      </svg>
    </div>
    <svg class="mt-auto mr-[2px] mb-[2px] ml-auto size-[12px]" viewBox="0 0 12 12" fill="#b5b5b5"><path d="M9 0h2v2H9zM9 3h2v2H9zM6 3h2v2H6zM9 6h2v2H9zM6 6h2v2H6zM3 6h2v2H3zM9 9h2v2H9zM6 9h2v2H6zM3 9h2v2H3zM0 9h2v2H0z"/></svg>
  </section>

  <!-- screenshot dialog, fading out -->
  <section class="absolute top-[670px] left-[1781px] flex h-[570px] w-[720px] flex-col rounded-t-[14px] bg-[#f6f5f4] text-[24px] leading-[36px] text-[#222] opacity-[.185] shadow-[0_6px_40px_4px_rgba(0,0,0,0.45),0_0_0_1px_rgba(0,0,0,0.3)]">
    <div class="flex h-[79px] shrink-0 items-center rounded-t-[14px] border-b-2 border-[#777] bg-[#dadada]">
      <svg class="ml-[27px] size-[26px]" viewBox="0 0 26 26"><rect x="1" y="1" width="24" height="24" rx="4" fill="#4c6fe6" stroke="#3350a8"/><path d="M5 6h15v13H5z" fill="none" stroke="#dde" stroke-dasharray="1.200 1.600"/></svg>
      <div class="ml-[41px] flex h-[56px] w-[237px] items-center justify-center rounded-md border-2 border-[#bbb] bg-[#f8f8f8]"><span class="fit -ml-px w-[75px]">Cancel</span></div>
      <div class="mr-[10px] ml-auto flex h-[57px] w-[240px] items-center justify-center rounded-md bg-[#03580c] text-white"><span class="fit w-[183px]">Take Screenshot</span></div>
    </div>
    <div class="mt-[13px] flex h-[36px] shrink-0 pl-[18px] font-bold"><span class="fit w-[196px]">Take Screenshot</span></div>
    <div class="mt-[6px] flex h-[144px] shrink-0">
      <svg class="mt-[62px] ml-[19px] size-[77px]" viewBox="0 0 77 77"><rect x="1" y="1" width="75" height="75" rx="9" fill="#5877e6" stroke="#333f80" stroke-width="2"/><rect x="12" y="16" width="48" height="41" fill="none" stroke="#fff" stroke-width="4" stroke-dasharray="4 3.500"/><path d="M60 48v18M51 57h18" stroke="#fff" stroke-width="4"/></svg>
      <div class="ml-[28px] flex flex-col gap-[11px]">
        <div class="flex h-[36px] items-center"><i class="size-[27px] rounded-full border-[9px] border-[#92277f] bg-white"></i><span class="fit ml-[7px] w-[248px]">Grab the whole screen</span></div>
        <div class="flex h-[36px] items-center"><i class="size-[27px] rounded-full border-2 border-[#b5b5b5]"></i><span class="fit ml-[7px] w-[275px]">Grab the current window</span></div>
        <div class="flex h-[36px] items-center"><i class="size-[27px] rounded-full border-2 border-[#b5b5b5]"></i><span class="fit ml-[7px] w-[210px]">Select area to grab</span></div>
      </div>
    </div>
    <div class="-mt-[2px] flex h-[56px] shrink-0 items-center pl-[117px]">
      <span class="fit w-[231px]">Grab after a delay of</span>
      <div class="ml-[10px] flex h-[56px] w-[197px] items-center rounded-md border-2 border-[#a0a0a0] bg-[#f2f7f0]"><span class="w-[77px] pl-[12px]">0</span><span class="flex h-full w-[59px] items-center justify-center border-l-2 border-[#c8c8c8]"><i class="h-[2px] w-[16px] bg-[#b5b5b5]"></i></span><span class="flex h-full w-[58px] items-center justify-center border-l-2 border-[#c8c8c8]"><svg class="size-[20px]" viewBox="0 0 20 20"><path d="M10 1v18M1 10h18" stroke="#222" stroke-width="2"/></svg></span></div>
      <span class="fit ml-[10px] w-[92px]">seconds</span>
    </div>
    <div class="mt-[27px] flex h-[36px] shrink-0 pl-[18px] font-bold"><span class="fit w-[84px]">Effects</span></div>
    <div class="mt-[6px] flex h-[36px] shrink-0 items-center pl-[45px]"><i class="size-[26px] rounded-sm border-2 border-[#b5b5b5]"></i><span class="fit ml-[5px] w-[170px]">Include pointer</span></div>
    <div class="mt-[11px] flex h-[36px] shrink-0 items-center pl-[45px] text-[#8f9a97]"><i class="size-[26px] rounded-sm border-2 border-[#b5b5b5]"><svg class="size-[22px]" viewBox="0 0 22 22"><path d="M4 10l5 7L19 4" fill="none" stroke="#888" stroke-width="3"/></svg></i><span class="fit ml-[5px] w-[297px]">Include the window border</span></div>
    <div class="mt-[11px] flex h-[56px] shrink-0 items-center pl-[37px] text-[#8f9a97]"><span class="fit w-[143px]">Apply effect:</span><div class="ml-[22px] flex h-[56px] w-[214px] items-center rounded-md border-2 border-[#b0b0b0] bg-[#f2f7f0] pr-[20px] pl-[17px] text-[#6f7775]"><span class="fit w-[61px]">None</span><svg class="ml-auto h-[9px] w-[16px]"><use href="#down"/></svg></div></div>
  </section>
</div>
<script>
  // Track each label so that it fills the width given to it.
  function fit() {
    document.querySelectorAll('.fit').forEach(function (el) {
      var box = parseFloat(getComputedStyle(el).width);
      if (!(box > 0) || getComputedStyle(el.parentElement).display === 'inline') return;
      el.style.flexShrink = 0;
      el.style.letterSpacing = '0.001px';
      var r = document.createRange();
      r.selectNodeContents(el);
      el.style.letterSpacing = ((box - r.getBoundingClientRect().width) / el.textContent.length).toFixed(3) + 'px';
    });
  }
  window.addEventListener('load', function () { fit(); requestAnimationFrame(fit); setTimeout(fit, 60); });
</script>
</body>
</html>
